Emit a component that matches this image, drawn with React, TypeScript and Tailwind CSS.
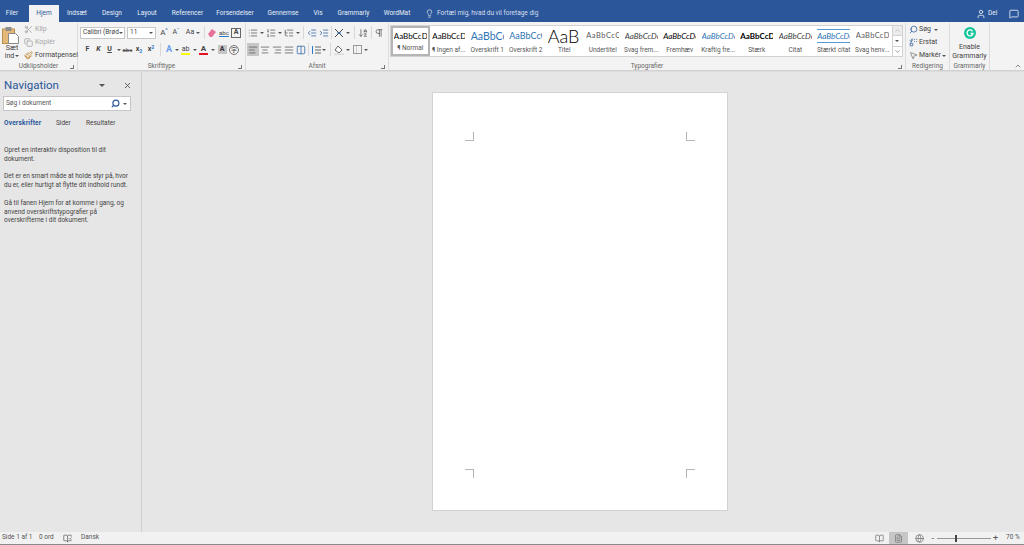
import {
  AlignCenter,
  AlignJustify,
  AlignLeft,
  AlignRight,
  ArrowDownAZ,
  BookOpen,
  BookOpenCheck,
  ChevronDown,
  ChevronUp,
  Columns2,
  Copy,
  FileText,
  Globe,
  IndentDecrease,
  IndentIncrease,
  Lightbulb,
  List,
  ListOrdered,
  ListTree,
  MessageSquare,
  MousePointer2,
  Paintbrush,
  Pilcrow,
  Replace,
  Scissors,
  Search,
  User,
  X,
} from "lucide-react";
import type { ReactNode } from "react";

const tabs = [
  { label: "Filer", className: "w-[29px] pr-[5px]" },
  { label: "Hjem", className: "w-[30px] bg-[#f3f3f3] text-[#2b579a]" },
  { label: "Indsæt", className: "w-[36px]" },
  { label: "Design", className: "w-[34px]" },
  { label: "Layout", className: "w-[36px]" },
  { label: "Referencer", className: "w-[45px]" },
  { label: "Forsendelser", className: "w-[50px]" },
  { label: "Gennemse", className: "w-[46px]" },
  { label: "Vis", className: "w-[24px]" },
  { label: "Grammarly", className: "w-[47px]" },
  { label: "WordMat", className: "w-[40px]" },
];

const styles = [
  { preview: "AaBbCcDc", label: "¶ Normal", className: "text-[8px] text-black" },
  { preview: "AaBbCcDc", label: "¶ Ingen af...", className: "text-[8px] text-black" },
  { preview: "AaBbCc", label: "Overskrift 1", className: "text-[10.5px] text-[#2e74b5]" },
  { preview: "AaBbCcC", label: "Overskrift 2", className: "text-[9px] text-[#2e74b5]" },
  { preview: "AaB", label: "Titel", className: "text-[18px] font-light text-black" },
  { preview: "AaBbCcC", label: "Undertitel", className: "text-[7.5px] tracking-[0.5px] text-[#5a5a5a]" },
  { preview: "AaBbCcDc", label: "Svag frem...", className: "text-[8px] italic text-[#404040]" },
  { preview: "AaBbCcDc", label: "Fremhæv", className: "text-[8px] italic text-black" },
  { preview: "AaBbCcDc", label: "Kraftig fre...", className: "text-[8px] italic text-[#2e74b5]" },
  { preview: "AaBbCcDc", label: "Stærk", className: "text-[8px] font-bold text-black" },
  { preview: "AaBbCcDc", label: "Citat", className: "text-[8px] italic text-[#404040]" },
  { preview: "AaBbCcDc", label: "Stærkt citat", className: "text-[8px] italic text-[#2e74b5] border-y border-[#5b9bd5]" },
  { preview: "AaBbCcDc", label: "Svag henv...", className: "text-[7.5px] tracking-[0.3px] text-[#5a5a5a]" },
];

function Caret({ className = "" }: { className?: string }) {
  return <span className={`h-0 w-0 border-x-[2px] border-t-[2px] border-x-transparent border-t-[#555] ${className}`} />;
}

function Cell({ w, children, active }: { w: string; children: ReactNode; active?: boolean }) {
  return (
    <span className={`flex h-[13px] shrink-0 items-center justify-center ${w} ${active ? "bg-[#c6c6c6]" : ""}`}>
      {children}
    </span>
  );
}

function Sep({ w }: { w: string }) {
  return (
    <span className={`flex h-[13px] shrink-0 justify-center ${w}`}>
      <span className="h-full w-px bg-[#d8d8d8]" />
    </span>
  );
}

function Launcher() {
  return <span className="h-[4px] w-[4px] border-b border-r border-[#777]" />;
}

function Group({ w, label, launcher, children }: { w: string; label: string; launcher?: boolean; children: ReactNode }) {
  return (
    <div className={`flex h-[48px] shrink-0 flex-col border-r border-[#dcdcdc] ${w}`}>
      <div className="min-h-0 flex-1">{children}</div>
      <div className="relative flex h-[9px] items-center justify-center text-[6.5px] text-[#666]">
        {label}
        {launcher && <span className="absolute right-[3px] top-[3px] flex"><Launcher /></span>}
      </div>
    </div>
  );
}

function Clipboard() {
  return (
    <svg width="20" height="17" viewBox="0 0 20 17">
      <rect x="0.5" y="2" width="12" height="14.5" fill="#e3b878" stroke="#b98f4f" />
      <rect x="3.5" y="0" width="6" height="4" fill="#8d8d8d" />
      <path d="M6.5 6.5h7l3 3v7h-10z" fill="#fff" stroke="#8a8a8a" />
    </svg>
  );
}

function Clipboards() {
  return (
    <div className="flex pl-[2px]">
      <div className="flex w-[20px] flex-col items-center pt-[4px] leading-[8px] text-[#444]">
        <Clipboard />
        <span className="text-[7px]">Sæt</span>
        <span className="flex items-center gap-[1px] text-[7px]">ind <Caret /></span>
      </div>
      <div className="ml-[2px] flex flex-col gap-[2px] pt-[1px] text-[7px]">
        <span className="flex h-[11px] items-center gap-[2px] text-[#a6a6a6]">
          <Scissors size={9} className="text-[#a0a0a0]" /> Klip
        </span>
        <span className="flex h-[11px] items-center gap-[2px] text-[#a6a6a6]">
          <Copy size={9} className="text-[#a0a0a0]" /> Kopiér
        </span>
        <span className="flex h-[11px] items-center gap-[2px] whitespace-nowrap text-[#444]">
          <Paintbrush size={9} className="text-[#b9791e]" /> Formatpensel
        </span>
      </div>
    </div>
  );
}

function FontGroup() {
  const bold = "text-[7px] font-bold text-[#444]";
  return (
    <div className="flex flex-col gap-[4px] pl-[2px] pt-[3px]">
      <div className="flex h-[13px] items-center">
        <span className="flex h-[12px] w-[45px] items-center justify-between whitespace-nowrap border border-[#c6c6c6] bg-white px-[2px] text-[6.5px] text-[#444]">
          Calibri (Brød <Caret />
        </span>
        <span className="ml-[2px] flex h-[12px] w-[29px] items-center justify-between border border-[#c6c6c6] bg-white px-[2px] text-[6.5px] text-[#444]">
          11 <Caret />
        </span>
        <Cell w="w-[12px] ml-[2px]"><span className="text-[8px] text-[#444]">A<sup className="text-[#2b579a]">^</sup></span></Cell>
        <Cell w="w-[12px]"><span className="text-[7px] text-[#444]">A<sup className="text-[#2b579a]">ˇ</sup></span></Cell>
        <Cell w="w-[18px] gap-[2px] ml-[2px]"><span className="text-[7px] text-[#444]">Aa</span><Caret /></Cell>
        <Sep w="w-[4px]" />
        <Cell w="w-[12px]">
          <svg width="10" height="10" viewBox="0 0 10 10"><path d="M1 6l4-5 4 3-4 5H3z" fill="#e8719a" /></svg>
        </Cell>
        <Cell w="w-[12px]"><span className="text-[6px] text-[#444] underline decoration-[#2b79c2]">abc</span></Cell>
        <Cell w="w-[12px]"><span className="flex h-[10px] w-[10px] items-center justify-center border border-[#666] text-[7px] font-bold text-[#444]">A</span></Cell>
      </div>
      <div className="flex items-center pl-[2px]">
        <Cell w="w-[11px]"><span className={bold}>F</span></Cell>
        <Cell w="w-[11px]"><span className={`${bold} italic`}>K</span></Cell>
        <Cell w="w-[11px]"><span className={`${bold} underline`}>U</span></Cell>
        <Cell w="w-[7px]"><Caret /></Cell>
        <Cell w="w-[11px]"><span className="text-[6px] text-[#555] line-through">abc</span></Cell>
        <Cell w="w-[12px]"><span className={bold}>x<sub className="text-[#2b79c2]">2</sub></span></Cell>
        <Cell w="w-[12px]"><span className={bold}>x<sup className="text-[#2b79c2]">2</sup></span></Cell>
        <Sep w="w-[7px]" />
        <Cell w="w-[10px]"><span className="text-[9px] font-bold text-[#6d9eeb]">A</span></Cell>
        <Cell w="w-[6px]"><Caret /></Cell>
        <Cell w="w-[11px]">
          <span className="flex flex-col items-center leading-[8px]">
            <span className="text-[7px] text-[#444]">ab</span>
            <span className="h-[2px] w-[9px] bg-[#ffff00]" />
          </span>
        </Cell>
        <Cell w="w-[7px]"><Caret /></Cell>
        <Cell w="w-[11px]">
          <span className="flex flex-col items-center leading-[8px]">
            <span className="text-[8px] font-bold text-[#444]">A</span>
            <span className="h-[2px] w-[9px] bg-[#e81123]" />
          </span>
        </Cell>
        <Cell w="w-[7px]"><Caret /></Cell>
        <Cell w="w-[12px]"><span className="flex h-[9px] w-[9px] items-center justify-center bg-[#c4c4c4] text-[7px] font-bold text-[#333]">A</span></Cell>
        <Cell w="w-[12px]"><span className="flex h-[10px] w-[10px] items-center justify-center rounded-full border border-[#777] font-['Noto_Sans_CJK_SC',sans-serif] text-[6px] text-[#444]">字</span></Cell>
      </div>
    </div>
  );
}

function ParagraphGroup() {
  const ic = "text-[#666]";
  return (
    <div className="flex flex-col gap-[4px] pl-[1px] pt-[3px]">
      <div className="flex items-center">
        <Cell w="w-[12px]"><List size={10} className={ic} /></Cell>
        <Cell w="w-[6px]"><Caret /></Cell>
        <Cell w="w-[12px]"><ListOrdered size={10} className={ic} /></Cell>
        <Cell w="w-[6px]"><Caret /></Cell>
        <Cell w="w-[12px]"><ListTree size={10} className={ic} /></Cell>
        <Cell w="w-[6px]"><Caret /></Cell>
        <Sep w="w-[5px]" />
        <Cell w="w-[12px]"><IndentDecrease size={10} className="text-[#3d6ea8]" /></Cell>
        <Cell w="w-[12px]"><IndentIncrease size={10} className="text-[#3d6ea8]" /></Cell>
        <Sep w="w-[3px]" />
        <Cell w="w-[12px]">
          <svg width="10" height="10" viewBox="0 0 10 10" fill="none" stroke="#4a4a4a"><path d="M1 1l8 8M9 1L1 9" /><path d="M3 5h4" stroke="#2b79c2" /></svg>
        </Cell>
        <Cell w="w-[6px]"><Caret /></Cell>
        <Sep w="w-[6px]" />
        <Cell w="w-[12px]"><ArrowDownAZ size={10} className={ic} /></Cell>
        <Sep w="w-[4px]" />
        <Cell w="w-[12px]"><Pilcrow size={10} className={ic} /></Cell>
      </div>
      <div className="flex items-center">
        <Cell w="w-[12px]" active><AlignLeft size={10} className={ic} /></Cell>
        <Cell w="w-[12px]"><AlignCenter size={10} className={ic} /></Cell>
        <Cell w="w-[12px]"><AlignRight size={10} className={ic} /></Cell>
        <Cell w="w-[12px]"><AlignJustify size={10} className={ic} /></Cell>
        <Cell w="w-[11px]"><Columns2 size={10} className="text-[#3d6ea8]" /></Cell>
        <Sep w="w-[5px]" />
        <Cell w="w-[10px]">
          <svg width="10" height="10" viewBox="0 0 10 10" fill="none" stroke="#666"><path d="M4 2h6M4 5h6M4 8h6" /><path d="M1.5 1v8" stroke="#2b79c2" /></svg>
        </Cell>
        <Cell w="w-[6px]"><Caret /></Cell>
        <Sep w="w-[6px]" />
        <Cell w="w-[12px]">
          <svg width="10" height="10" viewBox="0 0 10 10"><path d="M4 1l4 4-3 3-4-3z" fill="#fff" stroke="#666" /><rect x="0" y="8.5" width="10" height="1.5" fill="#d9d9d9" /></svg>
        </Cell>
        <Cell w="w-[6px]"><Caret /></Cell>
        <Cell w="w-[12px]">
          <span className="grid h-[9px] w-[9px] grid-cols-2 border border-[#999]"><span className="border-r border-[#ccc]" /><span /></span>
        </Cell>
        <Cell w="w-[6px]"><Caret /></Cell>
      </div>
    </div>
  );
}

function Gallery() {
  return (
    <div className="ml-[1px] mt-[2px] flex h-[32px] w-[513px] border border-[#d2d2d2] bg-white">
      {styles.map((s, i) => (
        <div
          key={s.label}
          className={`flex w-[38.5px] shrink-0 flex-col items-center justify-between overflow-hidden pb-[2px] ${i === 0 ? "border-2 border-[#b5b5b5]" : ""}`}
        >
          <span className="flex h-[20px] w-[33px] items-center overflow-hidden">
            <span className={`whitespace-nowrap font-['Lato',sans-serif] leading-[12px] ${s.className}`}>{s.preview}</span>
          </span>
          <span className="whitespace-nowrap text-[6.5px] leading-[8px] text-[#555]">{s.label}</span>
        </div>
      ))}
      <div className="ml-auto flex w-[11px] flex-col border-l border-[#d2d2d2] text-[#555]">
        <span className="flex flex-1 items-center justify-center bg-[#ececec]"><ChevronUp size={7} className="text-[#aaa]" /></span>
        <span className="flex flex-1 items-center justify-center border-y border-[#d2d2d2]"><Caret /></span>
        <span className="flex flex-1 items-center justify-center"><ChevronDown size={7} /></span>
      </div>
    </div>
  );
}

function Editing() {
  return (
    <div className="flex flex-col gap-[2px] pl-[3px] pt-[1px] text-[7px] text-[#444]">
      <span className="flex h-[11px] items-center gap-[1px]"><Search size={9} className="-scale-x-100 text-[#2b579a]" /> Søg <Caret className="ml-[2px]" /></span>
      <span className="flex h-[11px] items-center gap-[1px]"><Replace size={9} className="text-[#2b579a]" /> Erstat</span>
      <span className="flex h-[11px] items-center gap-[1px]"><MousePointer2 size={9} className="text-[#777]" /> Markér <Caret /></span>
    </div>
  );
}

function GrammarlyBtn() {
  return (
    <div className="flex flex-col items-center pt-[3px] text-[7px] leading-[9px] text-[#444]">
      <svg width="12" height="12" viewBox="0 0 12 12" className="mb-[4px] mt-[1px]">
        <circle cx="6" cy="6" r="6" fill="#15c39a" />
        <path d="M8.6 4.3A3 3 0 1 0 9 6.5H6.6" fill="none" stroke="#fff" strokeWidth="1.3" />
      </svg>
      <span>Enable</span>
      <span>Grammarly</span>
    </div>
  );
}

function CropMark({ className }: { className: string }) {
  return <span className={`h-[9px] w-[9px] border-[#b5b5b5] ${className}`} />;
}

function NavPane() {
  return (
    <aside className="flex w-[142px] shrink-0 flex-col border-r border-[#cfcfcf] pl-[3px] pr-[10px]">
      <div className="mt-[5px] flex h-[17px] items-center">
        <span className="pl-[1px] text-[11.5px] text-[#2b579a]">Navigation</span>
        <Caret className="ml-auto border-x-[3px] border-t-[3px]" />
        <X size={9} className="ml-[18px] mr-[-1px] text-[#555]" strokeWidth={2.5} />
      </div>
      <div className="mt-[2px] flex h-[15px] w-[128px] items-center border border-[#c6c6c6] bg-white pl-[2px] pr-[3px] text-[6.5px] text-[#555]">
        Søg i dokument
        <Search size={9} className="ml-auto -scale-x-100 text-[#2b579a]" strokeWidth={3} />
        <Caret className="ml-[3px]" />
      </div>
      <div className="mt-[8px] flex h-[9px] items-center pl-[1px] text-[6.5px] text-[#444]">
        <span className="w-[52px] font-bold tracking-[0.2px] text-[#2b579a]">Overskrifter</span>
        <span className="w-[30px]">Sider</span>
        <span>Resultater</span>
      </div>
      <div className="mt-[18px] flex flex-col gap-[9px] whitespace-nowrap pl-[1px] text-[6.5px] leading-[8.7px] text-[#444]">
        <p>Opret en interaktiv disposition til dit<br />dokument.</p>
        <p>Det er en smart måde at holde styr på, hvor<br />du er, eller hurtigt at flytte dit indhold rundt.</p>
        <p>Gå til fanen Hjem for at komme i gang, og<br />anvend overskriftstypografier på<br />overskrifterne i dit dokument.</p>
      </div>
    </aside>
  );
}

function StatusBar() {
  return (
    <footer className="flex h-[13px] shrink-0 items-center border-b border-[#8a8a8a] bg-[#f1f1f1] pl-[2px] text-[6.5px] text-[#555]">
      <span className="w-[37px]">Side 1 af 1</span>
      <span className="w-[24px]">0 ord</span>
      <span className="w-[18px]"><BookOpenCheck size={9} className="text-[#666]" /></span>
      <span>Dansk</span>
      <div className="ml-auto flex h-full items-center">
        <span className="flex w-[20px] justify-center"><BookOpen size={9} className="text-[#777]" /></span>
        <span className="flex h-full w-[19px] items-center justify-center bg-[#c6c6c6]"><FileText size={9} className="text-[#777]" /></span>
        <span className="flex w-[23px] justify-center"><Globe size={9} className="text-[#777]" /></span>
        <span className="text-[9px] leading-none text-[#555]">-</span>
        <span className="relative ml-[3px] mr-[2px] flex h-[1px] w-[54px] bg-[#999]">
          <span className="absolute left-[18px] top-[-3px] h-[7px] w-[2px] bg-[#444]" />
        </span>
        <span className="text-[9px] leading-none text-[#555]">+</span>
        <span className="ml-[8px] w-[18px] text-[6.5px]">70 %</span>
      </div>
    </footer>
  );
}

export default function App() {
  return (
    <div className="flex h-[545px] w-[1024px] flex-col overflow-hidden bg-[#e6e6e6] font-['Roboto',sans-serif]">
      <header className="flex h-[22px] shrink-0 items-end bg-[#2b579a] pt-[5px] text-[6.5px] text-[#e8eef7]">
        {tabs.map((t) => (
          <span key={t.label} className={`flex h-[17px] shrink-0 items-center justify-center ${t.className}`}>
            {t.label}
          </span>
        ))}
        <span className="ml-[2px] flex h-[17px] items-center gap-[3px] pl-[6px] text-[#d5dfee]">
          <Lightbulb size={9} /> Fortæl mig, hvad du vil foretage dig
        </span>
        <span className="ml-auto flex h-[17px] items-center pr-[5px]">
          <User size={10} />
          <span className="ml-[2px] w-[21px]">Del</span>
          <MessageSquare size={10} />
        </span>
      </header>

      <section className="flex h-[49px] shrink-0 items-start border-b border-[#d0d0d0] bg-[#f3f3f3] pt-[1px]">
        <Group w="w-[78px]" label="Udklipsholder" launcher><Clipboards /></Group>
        <Group w="w-[168px]" label="Skrifttype" launcher><FontGroup /></Group>
        <Group w="w-[143px]" label="Afsnit" launcher><ParagraphGroup /></Group>
        <Group w="w-[517px]" label="Typografier" launcher><Gallery /></Group>
        <Group w="w-[44px]" label="Redigering"><Editing /></Group>
        <Group w="w-[40px]" label="Grammarly"><GrammarlyBtn /></Group>
        <div className="ml-auto mt-[39px] pr-[2px]"><ChevronUp size={8} className="text-[#555]" /></div>
      </section>

      <main className="flex min-h-0 flex-1 border-t border-[#dcdcdc]">
        <NavPane />
        <div className="flex min-w-0 flex-1 justify-center pt-[20px]">
          <div className="mr-[7px] flex h-[419px] w-[296px] flex-col justify-between border border-[#d2d2d2] bg-white px-[32px] pb-[32px] pt-[39px]">
            <div className="flex justify-between">
              <CropMark className="border-b border-r" />
              <CropMark className="border-b border-l" />
            </div>
            <div className="flex justify-between">
              <CropMark className="border-r border-t" />
              <CropMark className="border-l border-t" />
            </div>
          </div>
        </div>
      </main>

      <StatusBar />
    </div>
  );
}
